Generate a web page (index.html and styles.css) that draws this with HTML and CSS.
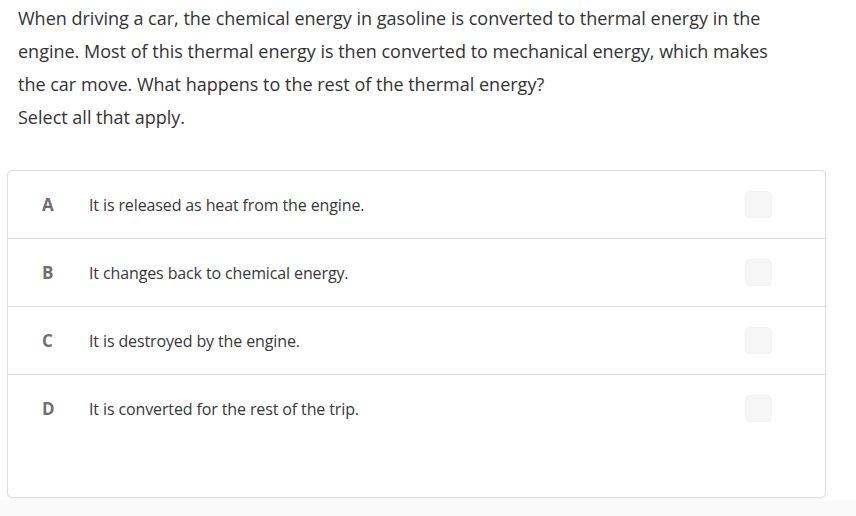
FILE: index.html
```html
<!DOCTYPE html>
<html>
<head>
<meta charset="utf-8">
<link rel="stylesheet" href="styles.css">
</head>
<body>
<div class="question">
  <p>When driving a car, the chemical energy in gasoline is converted to thermal energy in the engine. Most of this thermal energy is then converted to mechanical energy, which makes the car move. What happens to the rest of the thermal energy?</p>
  <p>Select all that apply.</p>
</div>
<div class="card">
  <div class="row"><span class="letter">A</span><span class="text">It is released as heat from the engine.</span><span class="box"></span></div>
  <div class="row"><span class="letter">B</span><span class="text">It changes back to chemical energy.</span><span class="box"></span></div>
  <div class="row"><span class="letter">C</span><span class="text">It is destroyed by the engine.</span><span class="box"></span></div>
  <div class="row last"><span class="letter">D</span><span class="text">It is converted for the rest of the trip.</span><span class="box"></span></div>
  <div class="filler"></div>
</div>
<div class="foot"></div>
</body>
</html>
```
FILE: styles.css
```css
html, body {
  margin: 0;
  padding: 0;
  background: #ffffff;
}
body {
  font-family: "Open Sans", "Liberation Sans", sans-serif;
  color: #333333;
  height: 516px;
  overflow: hidden;
}
.question {
  padding: 2px 60px 0 18px;
  font-size: 18px;
  line-height: 33px;
  color: #333;
}
.question p {
  margin: 0;
  width: 770px;
}
.card {
  margin: 36px 0 0 7px;
  width: 817px;
  border: 1px solid #dedede;
  border-radius: 5px;
  box-shadow: 0 1px 3px rgba(0,0,0,0.06);
  background: #fff;
}
.row {
  display: flex;
  align-items: center;
  height: 67px;
  border-bottom: 1px solid #dedede;
}
.row.last {
  border-bottom-color: transparent;
}
.letter {
  width: 81px;
  padding-left: 34px;
  box-sizing: border-box;
  font-weight: 700;
  font-size: 17px;
  color: #707070;
}
.text {
  flex: 1;
  font-size: 16px;
  letter-spacing: -0.12px;
  color: #383838;
}
.box {
  width: 25px;
  height: 25px;
  border: 1px solid #f3f3f3;
  background: #f6f6f6;
  border-radius: 5px;
  margin-right: 53px;
}
.filler {
  height: 54px;
}
.foot {
  margin-top: 2px;
  height: 40px;
  background: #fafafa;
}
```
